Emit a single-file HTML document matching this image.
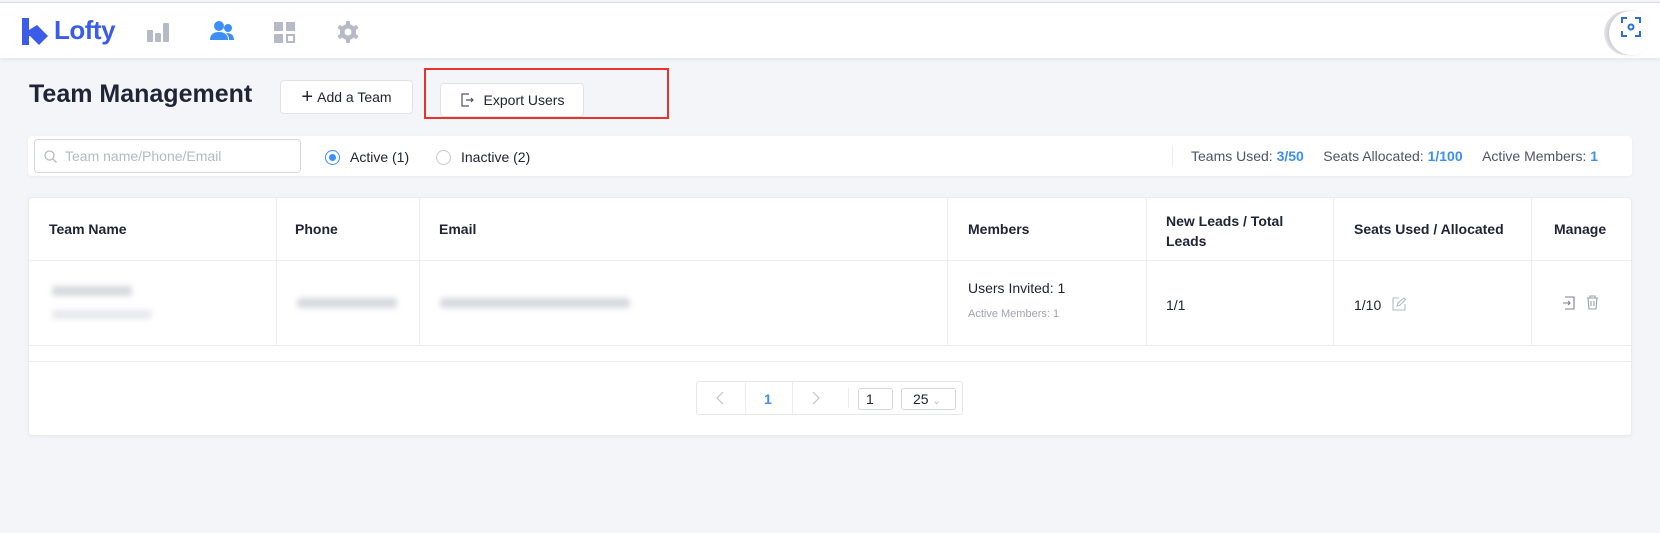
<!DOCTYPE html>
<html><head><meta charset="utf-8"><style>
*{box-sizing:border-box;margin:0;padding:0}
body{width:1660px;height:533px;background:#f4f5f9;font-family:"Liberation Sans",sans-serif;color:#202437;position:relative;overflow:hidden;font-size:14px}
.abs{position:absolute}
.top{left:0;top:2px;width:1660px;height:56px;background:#fff;border-top:1px solid #dcdde2;box-shadow:0 2px 4px rgba(0,0,0,.06)}
.btn{background:#fff;border:1px solid #e1e2e6;border-radius:4px;font-size:14px;color:#202437;display:flex;align-items:center;justify-content:center}
.card{background:#fff;border-radius:4px;box-shadow:0 1px 3px rgba(0,0,0,.05)}
.th{font-weight:bold;font-size:14px;color:#202437}
.vl{width:1px;background:#ebecf0}
.hl{height:1px;background:#ebecf0}
.blur{background:#d8d9de;filter:blur(3px);border-radius:3px}
.blue{color:#3b8ff6;font-weight:bold}
</style></head><body>
<div class="abs top"></div>
<svg class="abs" style="left:21px;top:18px" width="28" height="28" viewBox="0 0 28 28"><path d="M1 0h7v12l8-5 11 11-9 9-9-9-1 0v9H1z" fill="#3a5ce9"/></svg>
<div class="abs" style="left:54px;top:15px;font-size:26px;font-weight:bold;color:#3a5ce9;letter-spacing:-.5px">Lofty</div>
<svg class="abs" style="left:146px;top:20px" width="24" height="24" viewBox="0 0 24 24"><rect x="1" y="10" width="6" height="12" rx="1" fill="#b6b9c6"/><rect x="9" y="13" width="6" height="9" rx="1" fill="#b6b9c6"/><rect x="17" y="3" width="6" height="19" rx="1" fill="#b6b9c6"/></svg>
<svg class="abs" style="left:209px;top:20px" width="26" height="22" viewBox="0 0 26 22"><circle cx="10" cy="6" r="5" fill="#3b8ff6"/><circle cx="19" cy="8" r="4" fill="#3b8ff6"/><path d="M1 20c0-6 4-8 9-8s9 2 9 8z" fill="#3b8ff6"/><path d="M17 13c5 0 8 2 8 7h-5c0-3-1-5-3-7z" fill="#3b8ff6"/></svg>
<svg class="abs" style="left:273px;top:21px" width="24" height="24" viewBox="0 0 24 24"><rect x="1" y="1" width="9" height="9" fill="#b6b9c6"/><rect x="13" y="1" width="9" height="9" fill="#b6b9c6"/><rect x="1" y="13" width="9" height="9" fill="#b6b9c6"/><rect x="14" y="14" width="7" height="7" fill="none" stroke="#b6b9c6" stroke-width="2"/></svg>
<svg class="abs" style="left:336px;top:20px" width="24" height="24" viewBox="0 0 24 24"><g fill="#b6b9c6"><circle cx="12" cy="12" r="8"/><rect x="10" y="1" width="4" height="22" rx="1"/><rect x="10" y="1" width="4" height="22" rx="1" transform="rotate(60 12 12)"/><rect x="10" y="1" width="4" height="22" rx="1" transform="rotate(120 12 12)"/></g><circle cx="12" cy="12" r="3.5" fill="#fff"/></svg>
<div class="abs" style="left:1604px;top:11px;width:44px;height:44px;border-radius:50%;background:#e4e5e9"></div>
<div class="abs" style="left:1609px;top:11px;width:44px;height:44px;border-radius:50%;background:#fff;box-shadow:-2px 0 3px rgba(0,0,0,.12)"></div>
<svg class="abs" style="left:1621px;top:17px" width="20" height="20" viewBox="0 0 20 20" fill="none" stroke="#2a6fd6" stroke-width="2"><path d="M1 6V1h5M14 1h5v5M19 14v5h-5M6 19H1v-5"/><circle cx="10" cy="10" r="2.5"/></svg>

<div class="abs" style="left:29px;top:80px;font-size:25px;font-weight:bold;color:#202437">Team Management</div>
<div class="abs btn" style="left:280px;top:80px;width:133px;height:34px"><span style="font-size:20px;margin-right:4px;line-height:1">+</span>Add a Team</div>
<div class="abs" style="left:424px;top:68px;width:245px;height:51px;border:2px solid #e8322b"></div>
<div class="abs btn" style="left:440px;top:83px;width:144px;height:34px"><svg width="14" height="14" viewBox="0 0 14 14" fill="none" stroke="#505366" stroke-width="1.2" style="margin-right:10px"><path d="M9 1H2v12h7M6 7h7M11 5l2 2-2 2"/></svg>Export Users</div>

<div class="abs card" style="left:28px;top:136px;width:1604px;height:40px"></div>
<div class="abs" style="left:34px;top:139px;width:267px;height:34px;border:1px solid #d5d7de;border-radius:4px;background:#fff"></div>
<svg class="abs" style="left:44px;top:150px" width="13" height="13" viewBox="0 0 13 13" fill="none" stroke="#b6b9c6" stroke-width="1.3"><circle cx="5.5" cy="5.5" r="4.5"/><path d="M9 9l3.5 3.5"/></svg>
<div class="abs" style="left:65px;top:148px;color:#b6b9c6;font-size:14px">Team name/Phone/Email</div>
<div class="abs" style="left:325px;top:150px;width:15px;height:15px;border-radius:50%;border:1px solid #3b8ff6;background:#fff"><div style="margin:3px;width:7px;height:7px;border-radius:50%;background:#3b8ff6"></div></div>
<div class="abs" style="left:350px;top:149px;font-size:14px">Active (1)</div>
<div class="abs" style="left:436px;top:150px;width:15px;height:15px;border-radius:50%;border:1px solid #c6c8d0;background:#fff"></div>
<div class="abs" style="left:461px;top:149px;font-size:14px">Inactive (2)</div>
<div class="abs vl" style="left:1172px;top:146px;height:20px"></div>
<div class="abs" style="left:1191px;top:148px;font-size:14px;color:#505366;white-space:nowrap">Teams Used: <span class="blue">3/50</span>&nbsp;&nbsp;&nbsp;&nbsp;&nbsp;Seats Allocated: <span class="blue">1/100</span>&nbsp;&nbsp;&nbsp;&nbsp;&nbsp;Active Members: <span class="blue">1</span></div>

<div class="abs card" style="left:28px;top:197px;width:1604px;height:239px;border:1px solid #ebecf0"></div>
<div class="abs hl" style="left:28px;top:260px;width:1604px"></div>
<div class="abs hl" style="left:28px;top:345px;width:1604px"></div>
<div class="abs hl" style="left:28px;top:361px;width:1604px"></div>
<div class="abs vl" style="left:276px;top:197px;height:148px"></div>
<div class="abs vl" style="left:419px;top:197px;height:148px"></div>
<div class="abs vl" style="left:947px;top:197px;height:148px"></div>
<div class="abs vl" style="left:1146px;top:197px;height:148px"></div>
<div class="abs vl" style="left:1333px;top:197px;height:148px"></div>
<div class="abs vl" style="left:1531px;top:197px;height:148px"></div>
<div class="abs th" style="left:49px;top:221px">Team Name</div>
<div class="abs th" style="left:295px;top:221px">Phone</div>
<div class="abs th" style="left:439px;top:221px">Email</div>
<div class="abs th" style="left:968px;top:221px">Members</div>
<div class="abs th" style="left:1166px;top:211px;line-height:20px">New Leads / Total<br>Leads</div>
<div class="abs th" style="left:1354px;top:221px">Seats Used / Allocated</div>
<div class="abs th" style="left:1554px;top:221px">Manage</div>

<div class="abs blur" style="left:52px;top:286px;width:80px;height:10px"></div>
<div class="abs blur" style="left:52px;top:310px;width:100px;height:9px;opacity:.6"></div>
<div class="abs blur" style="left:297px;top:298px;width:100px;height:10px"></div>
<div class="abs blur" style="left:440px;top:298px;width:190px;height:10px"></div>
<div class="abs" style="left:968px;top:280px;font-size:14px">Users Invited: 1</div>
<div class="abs" style="left:968px;top:308px;font-size:11px;color:#a0a3af">Active Members: 1</div>
<div class="abs" style="left:1166px;top:297px;font-size:14px">1/1</div>
<div class="abs" style="left:1354px;top:297px;font-size:14px">1/10</div>
<svg class="abs" style="left:1392px;top:297px" width="14" height="14" viewBox="0 0 14 14" fill="none" stroke="#b6b9c6" stroke-width="1.1"><path d="M7 1H1v12h12V7"/><path d="M5 9l1-3 6-5 1.5 1.5-6 6z"/></svg>
<svg class="abs" style="left:1562px;top:296px" width="14" height="14" viewBox="0 0 14 14" fill="none" stroke="#7c7f8f" stroke-width="1.1"><path d="M3 1h9v12H3M1 7h7M6 5l2 2-2 2"/></svg>
<svg class="abs" style="left:1586px;top:295px" width="13" height="15" viewBox="0 0 13 15" fill="none" stroke="#9a9dab" stroke-width="1.1"><path d="M1 3h11M4 3V1h5v2M2 3l1 11h7l1-11M5 6v5M8 6v5"/></svg>

<div class="abs" style="left:696px;top:381px;width:267px;height:34px;border:1px solid #e6e7eb;border-radius:3px;background:#fff"></div>
<div class="abs vl" style="left:745px;top:382px;height:32px"></div>
<div class="abs vl" style="left:792px;top:382px;height:32px"></div>
<div class="abs vl" style="left:848px;top:388px;height:20px"></div>
<svg class="abs" style="left:716px;top:391px" width="8" height="14" viewBox="0 0 8 14" fill="none" stroke="#c2c4cc" stroke-width="1.2"><path d="M7 1L1 7l6 6"/></svg>
<div class="abs" style="left:764px;top:391px;color:#3b8ff6;font-weight:bold;font-size:14px">1</div>
<svg class="abs" style="left:812px;top:391px" width="8" height="14" viewBox="0 0 8 14" fill="none" stroke="#c2c4cc" stroke-width="1.2"><path d="M1 1l6 6-6 6"/></svg>
<div class="abs" style="left:858px;top:388px;width:35px;height:22px;border:1px solid #d5d7de;border-radius:3px;padding:2px 0 0 7px;font-size:14px">1</div>
<div class="abs" style="left:901px;top:388px;width:55px;height:22px;border:1px solid #d5d7de;border-radius:3px;padding:2px 0 0 11px;font-size:14px">25 <span style="color:#b6b9c6;font-size:10px">&#8964;</span></div>
</body></html>
